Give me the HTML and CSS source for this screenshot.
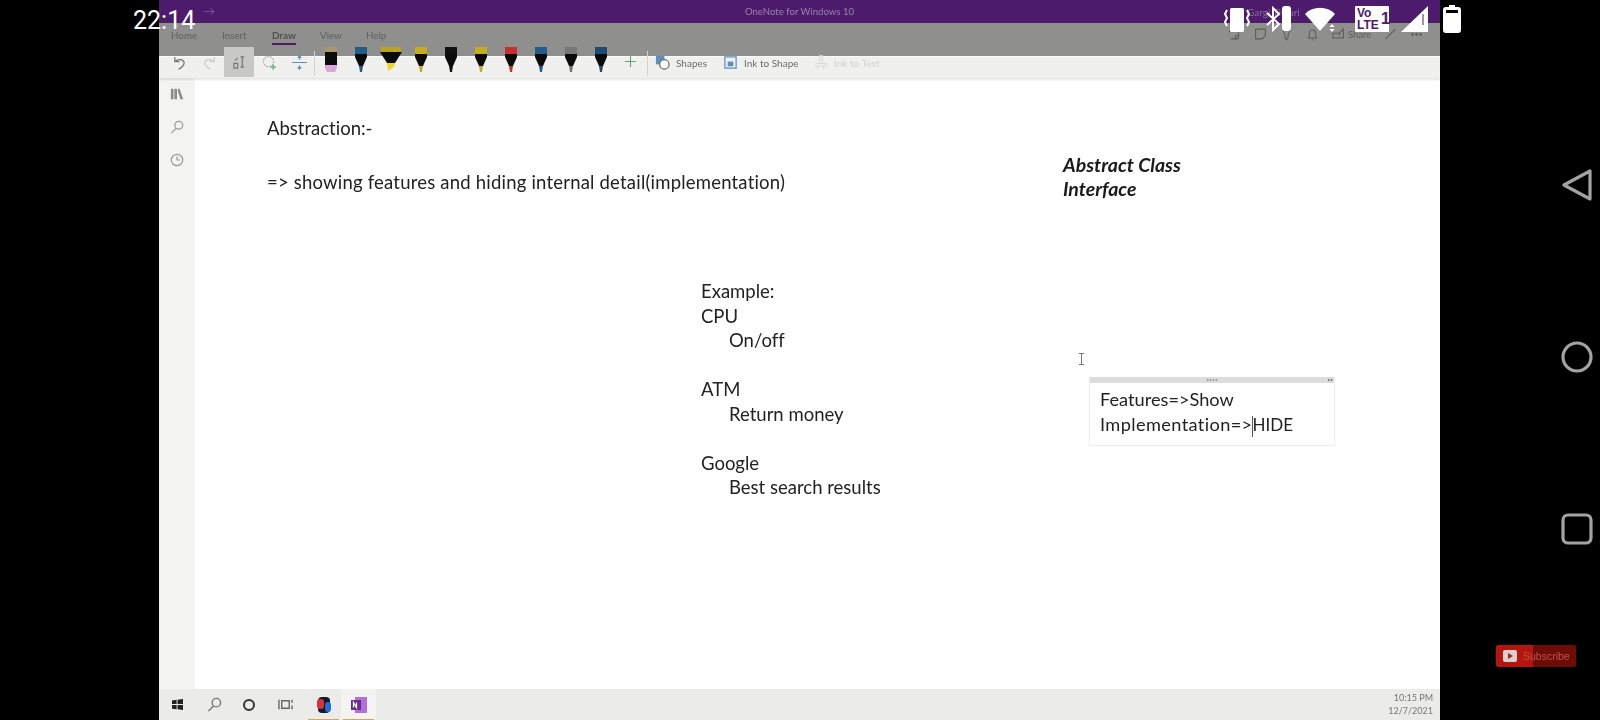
FILE: index.html
```html
<!DOCTYPE html>
<html lang="en">
<head>
<meta charset="utf-8">
<title>OneNote for Windows 10</title>
<link rel="stylesheet" href="styles.css">
</head>
<body>
<svg class="defs" width="0" height="0" aria-hidden="true">
  <symbol id="pen" viewBox="0 0 16 26" preserveAspectRatio="none">
    <path class="pen-cap" d="M2 0h12v7H2z"/>
    <path d="M2 7h12v3l-4 9H6l-4-9z" fill="#0b0b0b"/>
    <path class="pen-tip" d="M6 19h4l-1 6H7z"/>
  </symbol>
  <symbol id="pen-block" viewBox="0 0 16 26" preserveAspectRatio="none">
    <path d="M2 0h12v5H2z" fill="#a79674"/>
    <path d="M2 5h12v13H2z" fill="#0b0b0b"/>
    <path d="M2 18h12v3l-2 4H4l-2-4z" fill="#dca6dc"/>
  </symbol>
  <symbol id="pen-high" viewBox="0 0 22 26" preserveAspectRatio="none">
    <path d="M1 0h20v5H1z" fill="#b8a41e"/>
    <path d="M0 5h22l-7 11H7z" fill="#0b0b0b"/>
    <path d="M7 16h8l-1 4-6 4z" fill="#e8d82e"/>
  </symbol>
</svg>
<div class="screen">
  <div class="side"></div>
  <main class="app">
    <div class="titlebar">
      <span class="arrows">→</span>
      <span class="app-title">OneNote for Windows 10</span>
      <span class="user">Gargi Tiwari</span>
    </div>
    <div class="tabs">
      <span class="tab tab-home">Home</span>
      <span class="tab tab-insert">Insert</span>
      <span class="tab tab-draw">Draw</span>
      <span class="tab tab-view">View</span>
      <span class="tab">Help</span>
      <div class="tab-tools">
        <svg class="ti" viewBox="0 0 16 16"><path d="M1 6a6 6 0 0 1 11-1M3 14h8a2 2 0 0 0 2-2V6" /><circle cx="11" cy="12" r="2"/></svg>
        <svg class="ti" viewBox="0 0 16 16"><path d="M2 2h12v8l-4 4H2z"/></svg>
        <svg class="ti" viewBox="0 0 16 16"><path d="M3 2h10l-3 7v3l-2 3-2-3V9z"/></svg>
        <svg class="ti" viewBox="0 0 16 16"><path d="M4 11V7a4 4 0 0 1 8 0v4l1 2H3zM7 15h2"/></svg>
        <svg class="ti" viewBox="0 0 16 16"><path d="M1 7h8l5-5v11H1zM9 7v3"/></svg>
        <span class="share">Share</span>
        <svg class="ti" viewBox="0 0 16 16"><path d="M2 14 14 2"/></svg>
        <span class="more">•••</span>
      </div>
    </div>
    <div class="toolbar">
      <svg class="tool tool-undo" viewBox="0 0 16 16"><path d="M3 2v5h5M3 7c3-3 9-3 10 1 0 3-3 6-6 7"/></svg>
      <svg class="tool tool-redo" viewBox="0 0 16 16"><path d="M13 2v5H8M13 7c-3-3-9-3-10 1 0 3 3 6 6 7"/></svg>
      <div class="tool-selected">
        <svg class="tool" viewBox="0 0 16 16"><path d="M2 14v-5h4v5zM11 2v11M9 2h4M9 13h4M3 6l3-3"/></svg>
      </div>
      <svg class="tool tool-lasso" viewBox="0 0 16 16"><circle cx="7" cy="7" r="5.5" stroke-dasharray="2 1"/><path class="green" d="M9 13h6M12 10v6"/></svg>
      <svg class="tool tool-space" viewBox="0 0 16 16"><path class="blue" d="M0 8h16M8 1v4M6 3l2-2 2 2M8 15v-4M6 13l2 2 2-2"/></svg>
      <div class="tool-sep"></div>
      <div class="pens">
        <svg class="pen"><use href="#pen-block"/></svg>
        <svg class="pen p-blue"><use href="#pen"/></svg>
        <svg class="pen pen-wide"><use href="#pen-high"/></svg>
        <svg class="pen p-yellow"><use href="#pen"/></svg>
        <svg class="pen p-black"><use href="#pen"/></svg>
        <svg class="pen p-yellow"><use href="#pen"/></svg>
        <svg class="pen p-red"><use href="#pen"/></svg>
        <svg class="pen p-blue"><use href="#pen"/></svg>
        <svg class="pen p-grey"><use href="#pen"/></svg>
        <svg class="pen p-navy"><use href="#pen"/></svg>
      </div>
      <svg class="tool tool-add" viewBox="0 0 16 16"><path class="green" d="M8 1v14M1 8h14"/></svg>
      <div class="tool-sep sep-b"></div>
      <svg class="tool tool-shapes" viewBox="0 0 16 16"><path class="blue-fill" d="M1 1h9v9H1z"/><circle cx="10" cy="10" r="5" fill="#fff" stroke="#666"/></svg>
      <span class="tool-label label-shapes">Shapes</span>
      <svg class="tool tool-ink" viewBox="0 0 16 16"><path class="blue" d="M2 2h12v12H2z"/><path class="blue-fill" d="M5 7h6v5H5z"/></svg>
      <span class="tool-label label-ink">Ink to Shape</span>
      <svg class="tool tool-off" viewBox="0 0 16 16"><path d="M6 1h3v5H6zM2 9h11v3H2zM4 12v3M10 12v3"/></svg>
      <span class="tool-label label-off">Ink to Text</span>
    </div>
    <div class="workspace">
      <nav class="rail">
        <svg class="rail-icon" viewBox="0 0 16 16"><path class="solid" d="M1 2h3v12H1zM5 2h3v12H5zM9 2h2l4 12h-3l-3-9z"/></svg>
        <svg class="rail-icon" viewBox="0 0 16 16"><circle cx="10" cy="6" r="4.5"/><path d="M7 9.5 1.500 15"/></svg>
        <svg class="rail-icon" viewBox="0 0 16 16"><circle cx="8" cy="8" r="6.500"/><path d="M8 4v4h3.500"/></svg>
      </nav>
      <div class="canvas">
        <p class="note note-title">Abstraction:-</p>
        <p class="note note-def">=&gt; showing features and hiding internal detail(implementation)</p>
        <div class="note note-class"><p>Abstract Class</p><p>Interface</p></div>
        <div class="note note-list">
          <p>Example:</p>
          <p>CPU</p>
          <p class="indent">On/off</p>
          <p>&nbsp;</p>
          <p>ATM</p>
          <p class="indent">Return money</p>
          <p>&nbsp;</p>
          <p>Google</p>
          <p class="indent">Best search results</p>
        </div>
        <svg class="ibeam" viewBox="0 0 7 12"><path d="M1 .5h5M3.500.5v11M1 11.500h5"/></svg>
        <div class="note-box">
          <div class="box-bar"><span class="box-dots">••••</span><span class="box-end">••</span></div>
          <div class="box-text">
            <p>Features=&gt;Show</p>
            <p><span class="impl">Implementation=&gt;</span><span class="caret"></span><span class="hide">HIDE</span></p>
          </div>
        </div>
      </div>
    </div>
    <footer class="taskbar">
      <svg class="start" viewBox="0 0 12 12"><path d="M0 1.500 5 .8v4.700H0zM6 .7 12 0v5.500H6zM0 6.500h5v4.700L0 10.500zM6 6.500h6V12l-6-.8z"/></svg>
      <svg class="task-icon" viewBox="0 0 16 16"><circle cx="10" cy="6" r="4.500"/><path d="M7 9.500 1.500 15"/></svg>
      <span class="cortana"></span>
      <svg class="task-icon task-view" viewBox="0 0 16 16"><path class="dark" d="M1 3v10M15 3v3M15 9v4M4 4h8v8H4z"/></svg>
      <span class="task-app">
        <svg class="app-icon" viewBox="0 0 18 18"><rect x="3" y="1" width="12" height="16" rx="4" fill="#12182e"/><rect x="2" y="3" width="7" height="10" rx="3" fill="#d8333a"/><rect x="10" y="6" width="6" height="10" rx="3" fill="#1e6fd0"/></svg>
      </span>
      <span class="task-app task-on">
        <svg class="app-icon" viewBox="0 0 18 18"><rect x="5" y="1" width="12" height="16" fill="#b070d8"/><rect x="1" y="4" width="10" height="10" fill="#6a2c91"/><path d="M3.500 11.500v-5l3 5v-5" stroke="#fff" fill="none" stroke-width="1.300"/></svg>
      </span>
      <div class="clock"><span>10:15 PM</span><span>12/7/2021</span></div>
    </footer>
  </main>
  <aside class="navrail">
    <svg class="nav-icon nav-back" viewBox="0 0 32 32"><path d="M3 16 29 2v28z"/></svg>
    <svg class="nav-icon nav-home" viewBox="0 0 32 32"><circle cx="16" cy="16" r="14"/></svg>
    <svg class="nav-icon nav-recent" viewBox="0 0 32 32"><rect x="2" y="2" width="28" height="28" rx="5"/></svg>
    <div class="subscribe">
      <span class="sub-play"></span>
      <span class="sub-text">Subscribe</span>
    </div>
  </aside>
</div>
<div class="statusbar">
  <span class="time">22:14</span>
  <svg class="si si-vib" viewBox="0 0 26 26"><rect x="6" y="1" width="14" height="24" rx="1.500"/><path class="si-line" d="M3 3 1 7l2 4-2 4 2 4M23 3l2 4-2 4 2 4-2 4"/></svg>
  <svg class="si si-bt" viewBox="0 0 26 26"><path class="si-line" d="M1 7l12 11-6 6V2l6 6L1 19"/><rect x="16" y="0" width="9" height="25" rx="3"/></svg>
  <svg class="si si-wifi" viewBox="0 0 32 26"><path d="M0 8a21 21 0 0 1 30 0L15 25z"/><path d="M27 18l2.500 3h-5zM27 26l2.500-3h-5z"/></svg>
  <div class="volte"><span class="volte-text">Vo<br>LTE</span><span class="volte-one">1</span></div>
  <svg class="si si-signal" viewBox="0 0 28 28"><path d="M0 27 27 1v26z"/><path class="si-slit" d="M22 9v11"/></svg>
  <svg class="si si-batt" viewBox="0 0 18 28"><path fill-rule="evenodd" d="M6 0h6v2h3a3 3 0 0 1 3 3v20a3 3 0 0 1-3 3H3a3 3 0 0 1-3-3V5a3 3 0 0 1 3-3h3zM3 5v3h12V5z"/></svg>
</div>
</body>
</html>
```
FILE: styles.css
```css
* { box-sizing: border-box; }
html, body { margin: 0; height: 720px; overflow: hidden; background: #000; }
body { position: relative; font-family: Lato, "Open Sans", sans-serif; color: #222; }
p { margin: 0; }
.defs { position: absolute; }

.screen { display: flex; width: 1600px; height: 720px; }
.side { width: 159px; flex: none; background: #000; }
.app { width: 1281px; flex: none; display: flex; flex-direction: column; background: #fff; filter: blur(.55px); }

/* title bar */
.titlebar { position: relative; height: 23px; flex: none; background: #4c1b6c; display: flex; align-items: center; justify-content: center; color: #9b82ad; }
.arrows { position: absolute; left: 44px; top: 3px; font-size: 12px; color: #7b5c93; }
.app-title { font-size: 9.600px; }
.user { position: absolute; left: 1088px; top: 6px; font-size: 10px; color: #8b70a0; }

/* tabs */
.tabs { position: relative; height: 33px; flex: none; background: #8f908d; display: flex; align-items: flex-start; padding: 6px 0 0 12px; font-size: 9.800px; color: #5e5e5c; }
.tab { height: 17px; line-height: 13px; }
.tab-home { width: 51px; }
.tab-insert { width: 50px; }
.tab-draw { width: 48px; font-weight: 700; color: #4f4f4f; position: relative; }
.tab-draw::after { content: ""; position: absolute; left: 0; top: 14px; width: 24px; height: 2px; background: #4c1b6c; }
.tab-view { width: 46px; }
.tab-tools { position: absolute; left: 1069px; top: 4px; display: flex; align-items: center; gap: 13px; }
.ti { width: 13px; height: 14px; fill: none; stroke: #5c5c5a; stroke-width: 1.300; }
.share { font-size: 9.500px; margin-left: -10px; }
.more { font-size: 7px; }

/* toolbar */
.toolbar { position: relative; height: 22px; flex: none; background: #f0f0ee; border-top: 1px solid #fafafa; box-shadow: 0 2px 2px rgba(0,0,0,.1); display: flex; align-items: flex-start; padding-left: 13px; font-size: 10px; color: #6c6c6c; z-index: 2; }
.tool { width: 15px; height: 15px; flex: none; fill: none; stroke: #777; stroke-width: 1.300; }
.tool-undo { margin: -2px 15px 0 0; }
.tool-redo { stroke: #ccc; margin-top: -2px; }
.tool-selected { position: absolute; left: 65px; top: -10px; width: 30px; height: 30px; background: #c8c8c6; display: flex; align-items: center; justify-content: center; }
.tool-lasso { position: absolute; left: 103px; top: -2px; stroke: #b0b0b0; }
.tool-space { position: absolute; left: 133px; top: -2px; }
.green { stroke: #5ea878; }
.blue { stroke: #5a8fc0; }
.blue-fill { fill: #5a8fc0; stroke: none; }
.tool-sep { position: absolute; left: 155px; top: -6px; width: 1px; height: 25px; background: #d2d2d0; }
.sep-b { left: 488px; }
.pens { position: absolute; left: 164px; top: -10px; display: flex; gap: 14px; }
.pen { width: 16px; height: 26px; flex: none; }
.pen-wide { width: 22px; margin: 0 -3px; }
.pen-tip, .pen-cap { fill: currentColor; }
.p-blue { color: #245d88; }
.p-yellow { color: #c4ae1e; }
.p-black { color: #111; }
.p-red { color: #c43030; }
.p-grey { color: #777; }
.p-navy { color: #1f4a72; }
.tool-add { position: absolute; left: 465px; top: -2px; width: 13px; height: 13px; }
.tool-shapes { position: absolute; left: 496px; top: -2px; }
.tool-ink { position: absolute; left: 564px; top: -2px; }
.tool-off { position: absolute; left: 655px; top: -2px; stroke: #ddd; }
.tool-label { position: absolute; top: 0; line-height: 12px; }
.label-shapes { left: 517px; }
.label-ink { left: 585px; }
.label-off { left: 675px; color: #d2d2d2; }

/* workspace */
.workspace { flex: 1; display: flex; min-height: 0; }
.rail { width: 36px; flex: none; background: #f3f3f2; display: flex; flex-direction: column; align-items: center; gap: 19px; padding: 9px 0 0; }
.rail-icon { width: 14px; height: 14px; fill: none; stroke: #9a9a9a; stroke-width: 1.400; }
.rail-icon .solid { fill: #8a8a8a; stroke: none; }
.canvas { position: relative; flex: 1; background: #fff; font-size: 18.500px; line-height: 24.500px; font-variant-ligatures: none; }
.note { position: absolute; white-space: nowrap; }
.note-title { left: 72px; top: 38px; }
.note-def { left: 72px; top: 92px; letter-spacing: .2px; }
.note-class { left: 868px; top: 75px; font-weight: 700; font-style: italic; font-size: 19.500px; line-height: 24px; color: #1a1a1a; }
.note-list { left: 506px; top: 201px; }
.indent { padding-left: 28px; }
.ibeam { position: absolute; left: 883px; top: 275px; width: 7px; height: 12px; fill: none; stroke: #777; stroke-width: 1; }
.note-box { position: absolute; left: 894px; top: 299px; width: 246px; height: 69px; border: 1px solid #efefef; border-top: 0; box-shadow: 0 0 2px rgba(0,0,0,.05); }
.box-bar { position: relative; height: 6px; background: #dcdcdc; font-size: 5px; line-height: 6px; color: #999; text-align: center; }
.box-end { position: absolute; right: 1px; top: 0; color: #777; }
.box-text { padding: 4px 0 0 10px; font-size: 18.200px; }
.impl { letter-spacing: .38px; }
.hide { font-size: 17px; }
.caret { display: inline-block; position: relative; width: 0; height: 0; }
.caret::after { content: ""; position: absolute; left: -1px; top: -15px; width: 1px; height: 21px; background: #555; }

/* taskbar */
.taskbar { position: relative; height: 31px; flex: none; background: #ebebea; display: flex; align-items: center; padding-left: 13px; }
.start { width: 11px; height: 11px; fill: #222; flex: none; margin-right: 24px; }
.task-icon { width: 15px; height: 15px; flex: none; fill: none; stroke: #777; stroke-width: 1.500; margin-right: 20px; }
.task-icon .dark { stroke: #666; }
.cortana { width: 12px; height: 12px; border: 2.500px solid #333; border-radius: 50%; flex: none; margin: 0 23px 0 1px; }
.task-view { margin-right: 13px; }
.task-app { position: relative; width: 35px; height: 31px; display: flex; align-items: center; justify-content: center; flex: none; }
.task-app::after { content: ""; position: absolute; left: 2px; right: 2px; bottom: 0; height: 1.500px; background: #dda35a; }
.task-on { background: #f3f3f2; }
.app-icon { width: 18px; height: 18px; }
.clock { position: absolute; right: 7px; top: 3px; display: flex; flex-direction: column; align-items: flex-end; font-size: 9px; line-height: 12.500px; color: #777; }

/* right rail */
.navrail { position: relative; width: 160px; flex: none; }
.nav-icon { position: absolute; left: 121px; width: 32px; height: 32px; fill: none; stroke: #a3a3a3; stroke-width: 3.200; stroke-linejoin: round; }
.nav-back { top: 169px; }
.nav-home { top: 341px; }
.nav-recent { top: 513px; }
.subscribe { position: absolute; left: 56px; top: 645px; width: 80px; height: 22px; border-radius: 2px; background: linear-gradient(90deg, #b4150f 0 46%, #6e0d08 46%); display: flex; align-items: center; padding-left: 7px; gap: 6px; filter: blur(.5px); }
.sub-play { position: relative; width: 14px; height: 12px; border-radius: 2px; background: #d8d0cf; flex: none; }
.sub-play::after { content: ""; position: absolute; left: 5px; top: 3px; border-left: 5px solid #a8201a; border-top: 3px solid transparent; border-bottom: 3px solid transparent; }
.sub-text { font-size: 10.500px; color: #b8554f; font-family: "Liberation Sans", sans-serif; }

/* phone status bar */
.statusbar { position: absolute; left: 0; top: 0; width: 1600px; height: 40px; pointer-events: none; }
.time { position: absolute; left: 133px; top: 5px; font-family: Roboto, sans-serif; font-size: 25px; line-height: 31px; color: #fff; }
.si { position: absolute; fill: #fff; }
.si-line { fill: none; stroke: #fff; stroke-width: 2; }
.si-slit { fill: none; stroke: #4c1b6c; stroke-width: 1; }
.si-vib { left: 1224px; top: 7px; width: 26px; height: 26px; }
.si-bt { left: 1266px; top: 6px; width: 26px; height: 26px; }
.si-wifi { left: 1305px; top: 6px; width: 32px; height: 26px; }
.volte { position: absolute; left: 1355px; top: 6px; width: 34px; height: 26px; background: #fff; border-radius: 1px; display: flex; color: #4c1b6c; padding: 1px 0 0 2px; font-family: "Liberation Sans", sans-serif; font-weight: 700; }
.volte-text { font-size: 12px; line-height: 12px; }
.volte-one { font-size: 17px; line-height: 23px; margin-left: 2px; }
.si-signal { left: 1401px; top: 5px; width: 28px; height: 28px; }
.si-batt { left: 1443px; top: 5px; width: 18px; height: 28px; }
```
